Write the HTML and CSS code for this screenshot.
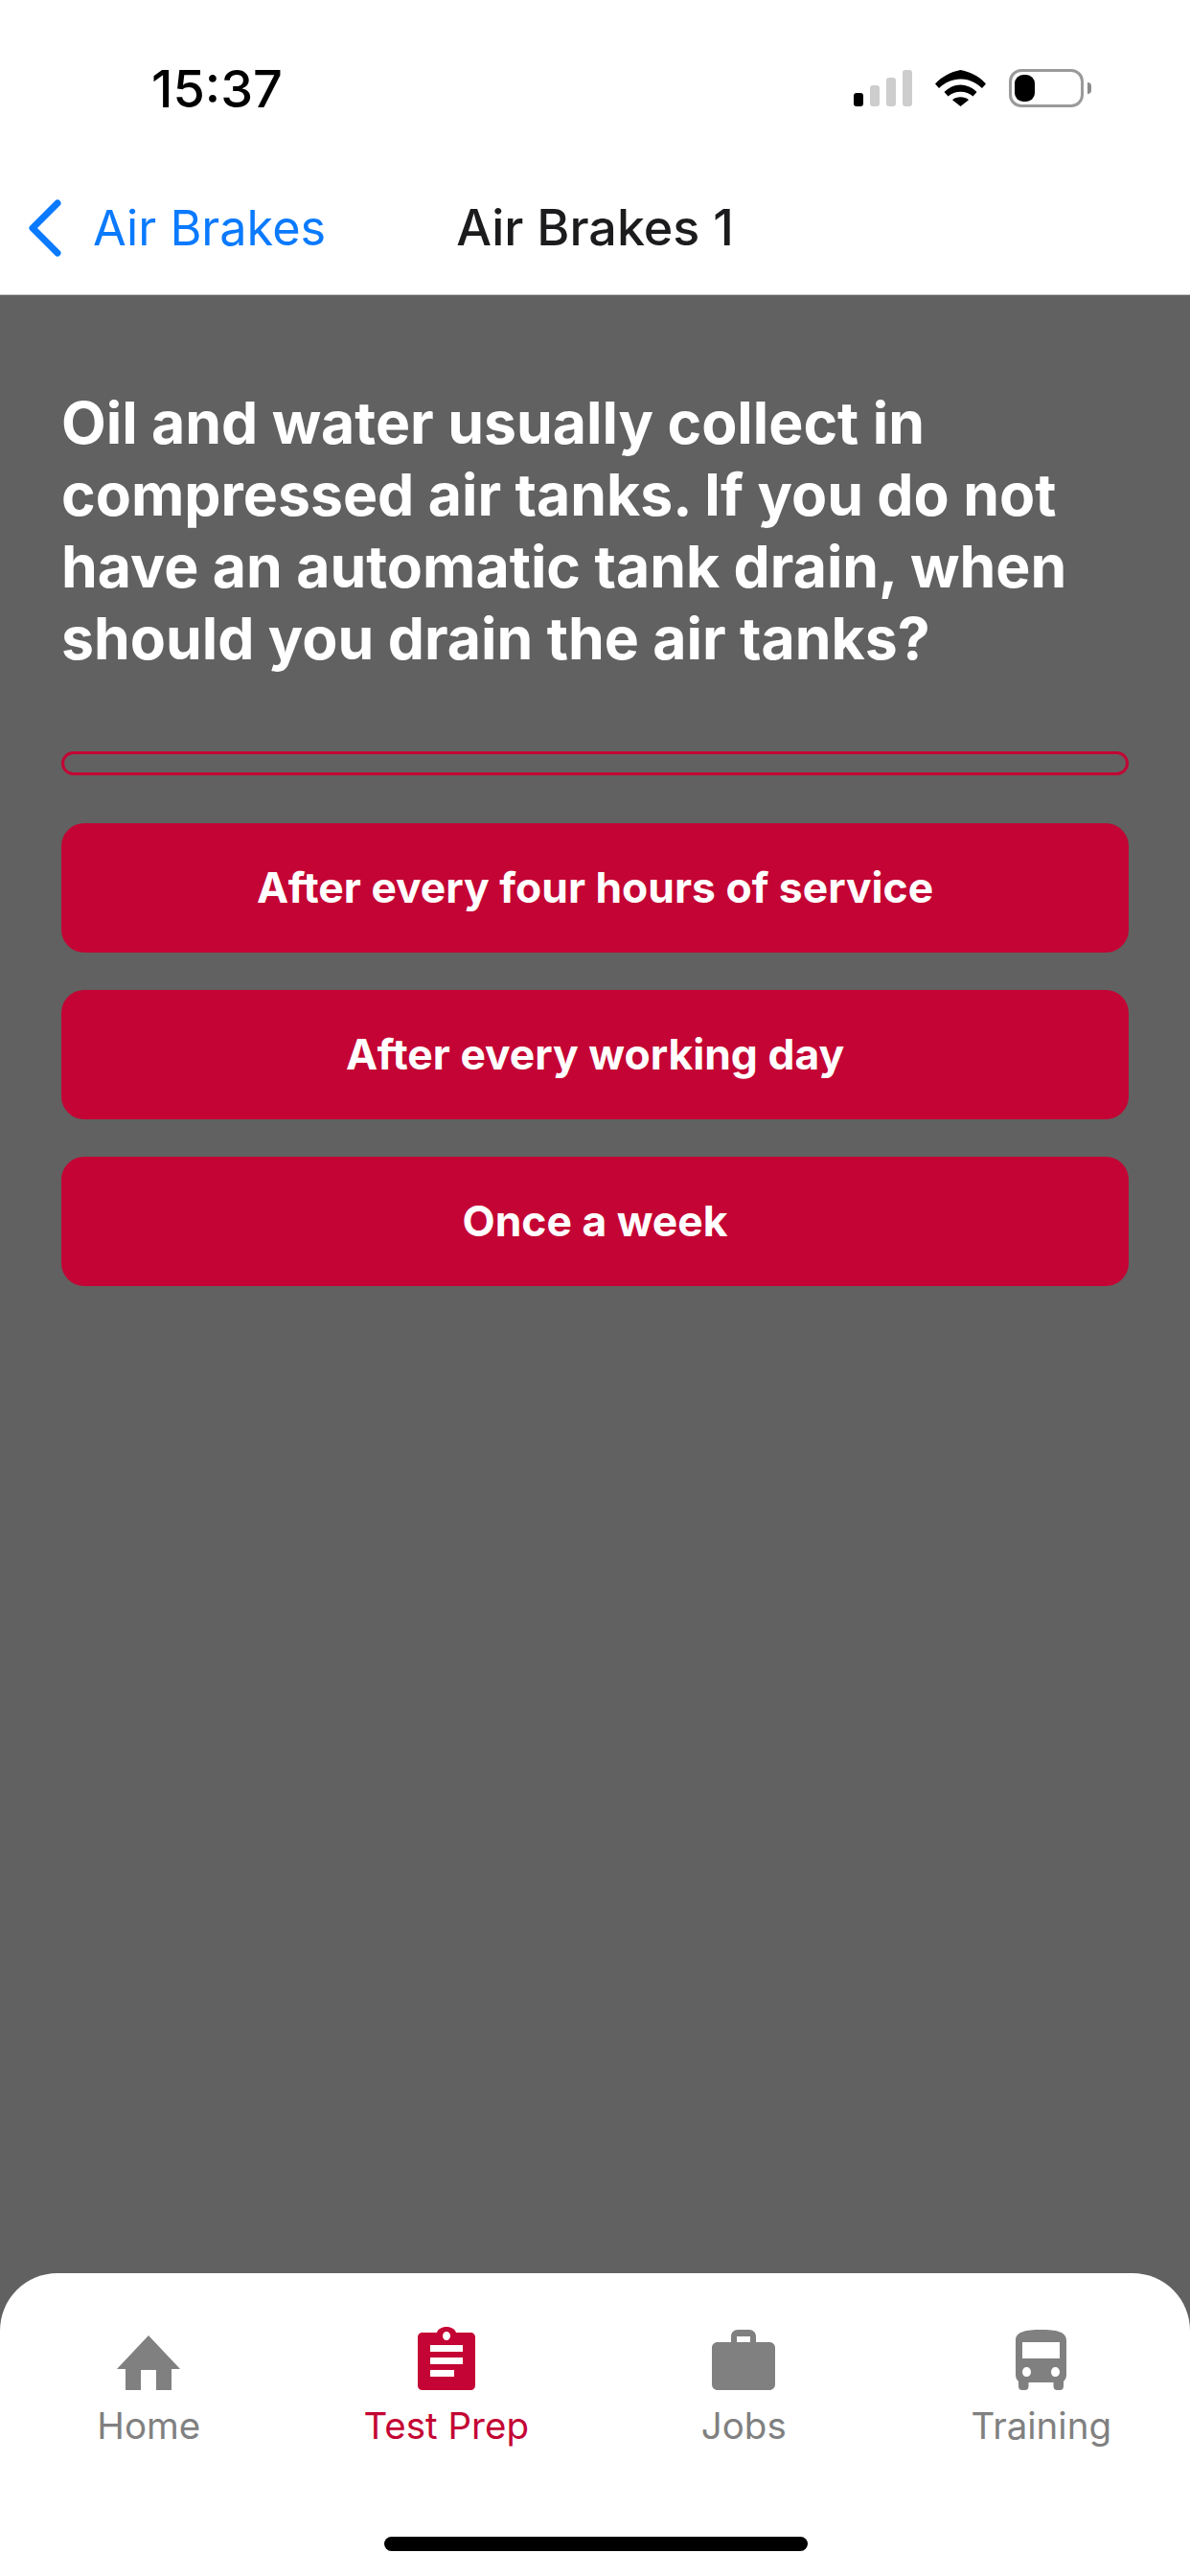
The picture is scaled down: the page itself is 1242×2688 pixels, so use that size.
FILE: index.html
```html
<!DOCTYPE html>
<html lang="en">
<head>
<meta charset="utf-8">
<title>Air Brakes 1</title>
<link rel="stylesheet" href="styles.css">
</head>
<body>
<div class="screen">
  <header class="top">
    <div class="status">
      <span class="time">15:37</span>
      <div class="status-icons">
        <div class="signal">
          <i class="bar b1 on"></i><i class="bar b2"></i><i class="bar b3"></i><i class="bar b4"></i>
        </div>
        <svg class="wifi" width="53" height="38" viewBox="0 0 53 38">
          <path d="M0 14.5C7 7 16 2 26.5 0C37 2 46 7 53 14.5L49 19C42.5 13 35 9.500 26.500 9.500C18 9.500 10.500 13 4 19Z" fill="#000"/>
          <path d="M9.500 23C14 18.500 20 15.500 26.500 15.500C33 15.500 39 18.500 43.500 23L39.500 27.500C36 24.500 31.500 22.800 26.500 22.800C21.500 22.800 17 24.500 13.500 27.500Z" fill="#000"/>
          <path d="M18 31.200C20.300 29.200 23.300 28.300 26.500 28.300C29.700 28.300 32.700 29.200 35 31.200L26.500 38Z" fill="#000"/>
        </svg>
        <div class="battery"><div class="charge"></div></div>
        <div class="battery-cap"></div>
      </div>
    </div>
    <nav class="nav">
      <a class="back">
        <svg class="chevron" width="36" height="60" viewBox="0 0 36 60">
          <path d="M31 4L5 30L31 56" fill="none" stroke="#0a7aff" stroke-width="7" stroke-linecap="round" stroke-linejoin="round"/>
        </svg>
        <span class="back-label">Air Brakes</span>
      </a>
      <h1 class="title">Air Brakes 1</h1>
    </nav>
  </header>

  <main class="content">
    <h2 class="question">Oil and water usually collect in compressed air tanks. If you do not have an automatic tank drain, when should you drain the air tanks?</h2>
    <div class="progress"></div>
    <div class="answers">
      <button class="answer">After every four hours of service</button>
      <button class="answer">After every working day</button>
      <button class="answer">Once a week</button>
    </div>
  </main>

  <footer class="tabbar">
    <div class="tabs">
      <div class="tab">
        <div class="tab-icon">
          <svg width="66" height="57" viewBox="0 0 66 57">
            <path d="M33 0L66 35H57V57H41V36H25V57H9V35H0Z" fill="#808080"/>
          </svg>
        </div>
        <span class="tab-label">Home</span>
      </div>
      <div class="tab active">
        <div class="tab-icon">
          <svg width="60" height="66" viewBox="0 0 60 66">
            <path fill-rule="evenodd" fill="#c40434" d="M5 6H20C21 2.500 25 0 30 0C35 0 39 2.500 40 6H55C58 6 60 8 60 11V61C60 64 58 66 55 66H5C2 66 0 64 0 61V11C0 8 2 6 5 6ZM30 5C27.800 5 26 7 26 9.500C26 12 27.800 14 30 14C32.200 14 34 12 34 9.500C34 7 32.200 5 30 5ZM13 19V26H47V19ZM13 32V39H47V32ZM13 45V52H38V45Z"/>
          </svg>
        </div>
        <span class="tab-label">Test Prep</span>
      </div>
      <div class="tab">
        <div class="tab-icon">
          <svg width="66" height="63" viewBox="0 0 66 63">
            <path fill-rule="evenodd" fill="#808080" d="M20 13V7C20 3 23 0 27 0H39C43 0 46 3 46 7V13H60C63.500 13 66 15.500 66 19V57C66 60.500 63.500 63 60 63H6C2.500 63 0 60.500 0 57V19C0 15.500 2.500 13 6 13ZM26 7V13H40V7Z"/>
          </svg>
        </div>
        <span class="tab-label">Jobs</span>
      </div>
      <div class="tab">
        <div class="tab-icon">
          <svg width="53" height="63" viewBox="0 0 53 63">
            <path fill-rule="evenodd" fill="#808080" d="M26.500 0C42 0 53 2 53 11V47C53 50 52 52 50 54V59C50 61.500 48.500 63 46.500 63H43C41 63 39.500 61.500 39.500 59V55H13.500V59C13.500 61.500 12 63 10 63H6.500C4.500 63 3 61.500 3 59V54C1 52 0 50 0 47V11C0 2 11 0 26.500 0ZM7 13V30H46V13ZM11.500 39C9 39 7 41 7 44C7 47 9 49 11.500 49C14 49 16 47 16 44C16 41 14 39 11.500 39ZM41.500 39C39 39 37 41 37 44C37 47 39 49 41.500 49C44 49 46 47 46 44C46 41 44 39 41.500 39Z"/>
          </svg>
        </div>
        <span class="tab-label">Training</span>
      </div>
    </div>
    <div class="home-indicator"></div>
  </footer>
</div>
</body>
</html>
```

FILE: styles.css
```css
* {
  box-sizing: border-box;
  margin: 0;
  padding: 0;
}

html,
body {
  width: 1242px;
  height: 2688px;
  overflow: hidden;
}

body {
  font-family: Inter, "Liberation Sans", sans-serif;
  background: #616161;
}

.screen {
  width: 1242px;
  height: 2688px;
  display: flex;
  flex-direction: column;
  background: #616161;
}

.top {
  height: 308px;
  background: #fff;
  border-bottom: 1px solid #c8c8c8;
  flex: none;
}

.status {
  height: 180px;
  position: relative;
  display: flex;
  padding: 63px 103px 0 158px;
  justify-content: space-between;
  align-items: flex-start;
}

.time {
  font-size: 54px;
  line-height: 60px;
  font-weight: 500;
  color: #000;
}

.status-icons {
  display: flex;
  align-items: flex-start;
  padding-top: 10px;
}

.signal {
  display: flex;
  align-items: flex-end;
  gap: 7px;
  height: 38px;
  margin-right: 24px;
}

.bar {
  display: block;
  width: 10px;
  border-radius: 3px;
  background: #cdcdcd;
}

.bar.on {
  background: #000;
}

.b1 { height: 14px; }
.b2 { height: 22px; }
.b3 { height: 30px; }
.b4 { height: 38px; }

.wifi {
  margin-right: 24px;
}

.battery {
  width: 78px;
  height: 40px;
  margin-top: -1px;
  border: 3px solid #9a9a9a;
  border-radius: 13px;
  padding: 3px;
}

.charge {
  width: 21px;
  height: 28px;
  background: #000;
  border-radius: 9px;
}

.battery-cap {
  width: 4px;
  height: 12px;
  margin: 13px 0 0 4px;
  background: #8a8a8a;
  border-radius: 0 6px 6px 0;
}

.nav {
  height: 127px;
  display: grid;
  grid-template-columns: 1fr;
  align-items: center;
  position: relative;
}

.back {
  grid-area: 1 / 1;
  display: flex;
  align-items: center;
  padding-left: 29px;
  margin-top: -11px;
}

.chevron {
  margin-right: 32px;
}

.back-label {
  font-size: 50.4px;
  line-height: 60px;
  font-weight: 400;
  color: #0a7aff;
}

.title {
  grid-area: 1 / 1;
  justify-self: center;
  font-size: 52px;
  line-height: 60px;
  font-weight: 500;
  color: #1c1c1e;
  margin-top: -11px;
}

.content {
  flex: 1;
  padding: 96px 64px 0;
  display: flex;
  flex-direction: column;
}

.question {
  font-size: 60.7px;
  line-height: 75px;
  font-weight: 700;
  color: #fff;
}

.progress {
  height: 25px;
  margin-top: 80px;
  border: 3px solid #c40434;
  border-radius: 13px;
}

.answers {
  margin-top: 50px;
  display: flex;
  flex-direction: column;
  gap: 39px;
}

.answer {
  height: 135px;
  border: none;
  border-radius: 24px;
  background: #c40434;
  color: #fff;
  font-family: inherit;
  font-size: 44.4px;
  font-weight: 700;
  text-align: center;
  padding-bottom: 2px;
}

.tabbar {
  height: 316px;
  flex: none;
  background: #fff;
  border-radius: 60px 60px 0 0;
  padding-top: 56px;
  position: relative;
}

.tabs {
  display: grid;
  grid-template-columns: repeat(4, 1fr);
}

.tab {
  display: flex;
  flex-direction: column;
  align-items: center;
  color: #808080;
}

.tab.active {
  color: #c40434;
}

.tab-icon {
  height: 66px;
  display: flex;
  align-items: flex-end;
}

.tab-label {
  margin-top: 15px;
  font-size: 38.5px;
  line-height: 45px;
  font-weight: 400;
}

.home-indicator {
  position: absolute;
  left: 401px;
  bottom: 26px;
  width: 442px;
  height: 15px;
  background: #000;
  border-radius: 8px;
}
```
